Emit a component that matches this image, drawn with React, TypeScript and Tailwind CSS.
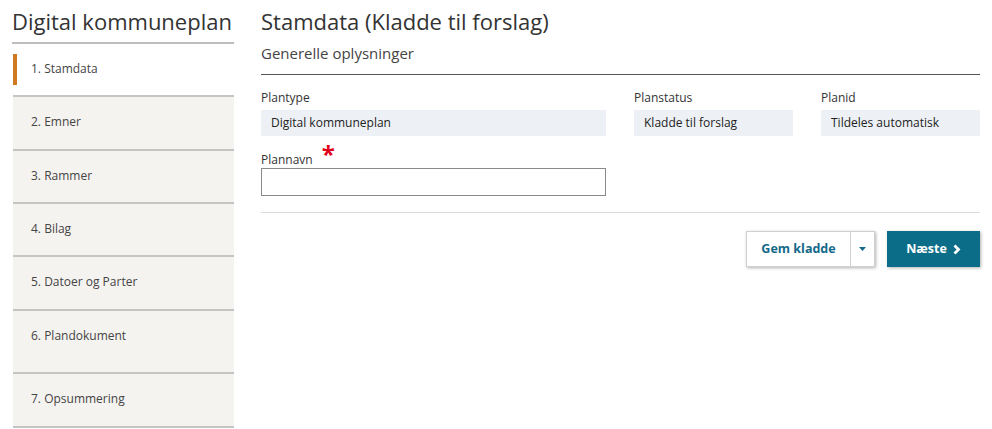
import React from "react";

const items = [
  { label: "1. Stamdata", active: true, h: "h-[53px]" },
  { label: "2. Emner", h: "h-[54px]" },
  { label: "3. Rammer", h: "h-[53px]" },
  { label: "4. Bilag", h: "h-[53px]" },
  { label: "5. Datoer og Parter", h: "h-[54px]" },
  { label: "6. Plandokument", h: "h-[63px]" },
  { label: "7. Opsummering", h: "h-[54px]" },
];

function Field({ label, value, w }: { label: string; value: string; w: string }) {
  return (
    <div className={w}>
      <div className="text-[12px] leading-[16px] text-[#333] h-[21px] pt-[5px] mb-[4px]">{label}</div>
      <div className="h-[26px] bg-[#edf1f5] flex items-center pl-[10px] text-[12px] text-[#222]">{value}</div>
    </div>
  );
}

export default function App() {
  return (
    <div className="w-[992px] h-[429px] bg-white overflow-hidden font-['Open_Sans',sans-serif] text-[#333] flex pl-[13px] gap-[27px] pr-[13px]">
      <aside className="w-[221px] shrink-0">
        <h1 className="text-[22px] leading-[42px] h-[44px] -ml-[1px] border-b-2 border-[#bdbdbd] text-[#333] whitespace-nowrap">
          Digital kommuneplan
        </h1>
        {items.map((it) => (
          <div
            key={it.label}
            className={`${it.h} border-b-2 border-[#c4c4c4] flex items-start pl-[18px] pt-[16px] text-[12px] relative ${
              it.active ? "bg-white" : "bg-[#f5f3f0]"
            }`}
          >
            {it.active && <div className="absolute left-0 top-[10px] w-[4px] h-[31px] bg-[#d1791f]" />}
            <span className="text-[#444]">{it.label}</span>
          </div>
        ))}
      </aside>
      <main className="flex-1">
        <h2 className="text-[22px] leading-[42px] h-[43px] text-[#333] whitespace-nowrap">Stamdata (Kladde til forslag)</h2>
        <div className="text-[15px] leading-[20px] h-[32px] border-b border-[#555] text-[#444]">Generelle oplysninger</div>
        <div className="flex gap-[27px] mt-[10px]">
          <Field label="Plantype" value="Digital kommuneplan" w="w-[345px]" />
          <Field label="Planstatus" value="Kladde til forslag" w="w-[159px] ml-[1px]" />
          <Field label="Planid" value="Tildeles automatisk" w="w-[159px] ml-[1px]" />
        </div>
        <div className="mt-[8px] flex items-end h-[25px]">
          <span className="text-[12px] leading-[16px] pb-[1px]">Plannavn</span>
          <span className="text-[#e1001a] text-[24px] leading-[20px] font-bold ml-[9px] relative -top-[5px]">*</span>
        </div>
        <input className="block w-[345px] h-[28px] border border-[#8a8a8a] mt-[-1px] outline-none px-2 text-[12px]" />
        <div className="border-b border-[#dcdcdc] mt-[16px]" />
        <div className="flex justify-end mt-[18px] gap-[12px]">
          <div className="flex h-[36px] shadow-[1px_1px_3px_rgba(0,0,0,0.3)] border border-[#d0d0d0] bg-white">
            <button className="w-[104px] text-[12.5px] font-bold text-[#14698a] border-r border-[#d0d0d0]">Gem kladde</button>
            <button className="w-[23px] flex items-center justify-center text-[#14698a]">
              <svg width="7" height="4" viewBox="0 0 7 4"><path d="M0 0h7L3.5 4z" fill="currentColor" /></svg>
            </button>
          </div>
          <button className="w-[93px] h-[36px] bg-[#0b6d88] text-white text-[12.5px] font-bold flex items-center justify-center gap-[6px] shadow-[1px_1px_3px_rgba(0,0,0,0.3)]">
            Næste
            <svg width="8" height="11" viewBox="0 0 8 11"><path d="M1.5 1.5l4 4-4 4" stroke="currentColor" strokeWidth="2.8" fill="none" /></svg>
          </button>
        </div>
      </main>
    </div>
  );
}
